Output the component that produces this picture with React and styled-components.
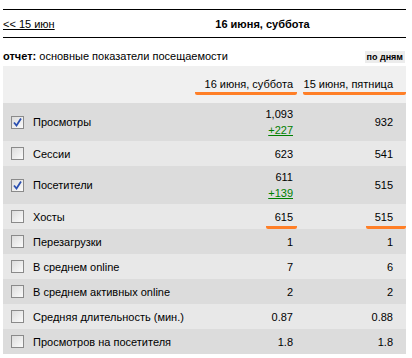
import styled, { createGlobalStyle } from 'styled-components';

const GlobalStyle = createGlobalStyle`
  body {
    margin: 0;
    background: #fff;
    font-family: "Liberation Sans", Arial, sans-serif;
    font-size: 11px;
    color: #000;
  }
`;

const Page = styled.div`
  width: 403px;
  padding: 9px 0 0 3px;
  white-space: nowrap;
`;

const NavBar = styled.div`
  display: grid;
  grid-template-columns: 1fr auto 1fr;
  align-items: center;
  height: 27px;
  border-top: 1px solid #000;
  border-bottom: 1px solid #000;
`;

const BackLink = styled.a`
  color: #000;
  text-decoration: underline;
`;

const DayTitle = styled.div`
  font-weight: bold;
  transform: translateX(58px);
`;

const ReportBar = styled.div`
  display: flex;
  justify-content: space-between;
  align-items: flex-end;
  height: 28px;
  padding-bottom: 3px;
  box-sizing: border-box;
  line-height: 13px;
`;

const ReportLabel = styled.span`
  b { font-weight: bold; }
`;

const Chip = styled.span`
  background: #ececec;
  font-size: 9px;
  font-weight: bold;
  line-height: 12px;
  padding: 0 2px;
  margin-right: 1px;
`;

const Panel = styled.div`
  background: #f0f0f0;
`;

const HeadRow = styled.div`
  display: grid;
  grid-template-columns: 1fr 102px 109px;
  height: 37px;
  align-items: end;
`;

const HeadCell = styled.div`
  text-align: right;
  line-height: 14px;
  padding: 0 ${p => p.$pad}px 1px 0;
  margin-left: ${p => p.$ml}px;
  border-bottom: 3px solid #ff7f27;
  border-radius: 2px;
  margin-bottom: 8px;
  color: #000;
`;

const Row = styled.div`
  display: grid;
  grid-template-columns: 1fr 102px 109px;
  align-items: center;
  min-height: 25px;
  background: ${p => (p.$dark ? '#dcdcdc' : '#e8e8e8')};
`;

const Label = styled.label`
  display: flex;
  align-items: center;
  gap: 9px;
  padding-left: 8px;
  color: #000;
`;

const Box = styled.span`
  width: 11px;
  height: 11px;
  border: 1px solid #8a8a8a;
  background: linear-gradient(135deg, #dcdcdc, #fbfbfb);
  display: inline-flex;
  align-items: center;
  justify-content: center;
`;

const Value = styled.div`
  text-align: right;
  padding-right: ${p => p.$pad}px;
  display: flex;
  flex-direction: column;
  align-items: flex-end;
  gap: 2px;
  line-height: 14px;
  padding-top: ${p => (p.$tall ? 4 : 0)}px;
  padding-bottom: ${p => (p.$tall ? 4 : 0)}px;
`;

const Marked = styled.span`
  display: inline-block;
  padding: 0 ${p => p.$pr}px 2px ${p => p.$pl}px;
  margin-right: -${p => p.$pr}px;
  border-bottom: ${p => (p.$mark ? '3px solid #ff7f27' : '3px solid transparent')};
  border-radius: 2px;
  line-height: 14px;
  margin-bottom: -5px;
`;

const Delta = styled.a`
  color: #008000;
  text-decoration: underline;
`;

const Check = () => (
  <svg width="9" height="9" viewBox="0 0 9 9">
    <path d="M1 4.5 L3.5 7.5 L8 0.5" fill="none" stroke="#2a4fb0" strokeWidth="1.8" />
  </svg>
);

const rows = [
  { name: 'Просмотры', a: '1,093', b: '932', delta: '+227', checked: true },
  { name: 'Сессии', a: '623', b: '541' },
  { name: 'Посетители', a: '611', b: '515', delta: '+139', checked: true },
  { name: 'Хосты', a: '615', b: '515', mark: true },
  { name: 'Перезагрузки', a: '1', b: '1' },
  { name: 'В среднем online', a: '7', b: '6' },
  { name: 'В среднем активных online', a: '2', b: '2' },
  { name: 'Средняя длительность (мин.)', a: '0.87', b: '0.88' },
  { name: 'Просмотров на посетителя', a: '1.8', b: '1.8' },
];

export default function App() {
  return (
    <Page>
      <GlobalStyle />
      <NavBar>
        <div><BackLink href="#">&lt;&lt; 15 июн</BackLink></div>
        <DayTitle>16 июня, суббота</DayTitle>
        <div />
      </NavBar>
      <ReportBar>
        <ReportLabel><b>отчет:</b> основные показатели посещаемости</ReportLabel>
        <Chip>по дням</Chip>
      </ReportBar>
      <Panel>
        <HeadRow>
          <div />
          <HeadCell $pad={4} $ml={0}>16 июня, суббота</HeadCell>
          <HeadCell $pad={13} $ml={6}>15 июня, пятница</HeadCell>
        </HeadRow>
        {rows.map((r, i) => (
          <Row key={r.name} $dark={i % 2 === 0}>
            <Label>
              <Box>{r.checked && <Check />}</Box>
              {r.name}
            </Label>
            <Value $pad={4} $tall={!!r.delta}>
              <Marked $mark={r.mark} $pl={9} $pr={4}>{r.a}</Marked>
              {r.delta && <Delta href="#">{r.delta}</Delta>}
            </Value>
            <Value $pad={13}>
              <Marked $mark={r.mark} $pl={9} $pr={13}>{r.b}</Marked>
            </Value>
          </Row>
        ))}
      </Panel>
    </Page>
  );
}
